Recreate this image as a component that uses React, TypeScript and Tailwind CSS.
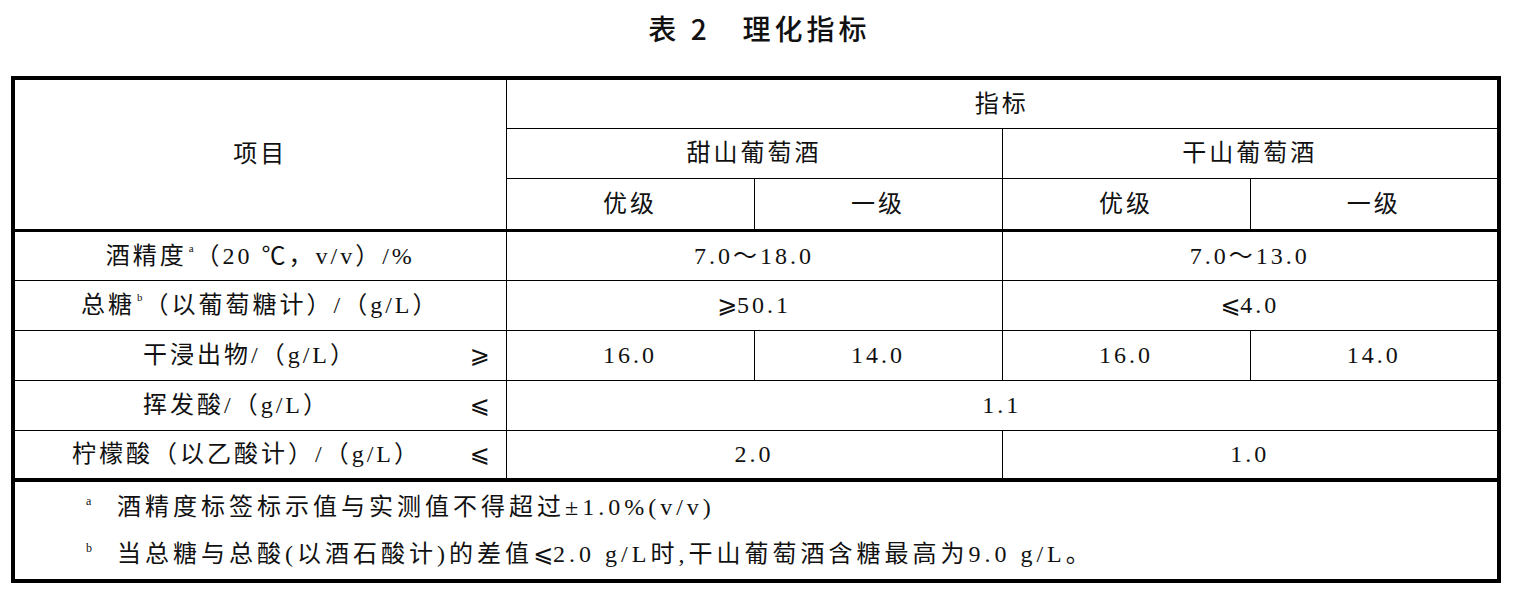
const cell = 'border border-black text-center align-middle p-0'

function Sym({ children }: { children: React.ReactNode }) {
  return <span className="font-['DejaVu_Sans',sans-serif] tracking-normal">{children}</span>
}

function Mark({ children }: { children: React.ReactNode }) {
  return <sup className="relative top-[5px] ml-[2px] mr-[2px] align-top text-[11px] leading-none tracking-normal">{children}</sup>
}

export default function App() {
  return (
    <div className="w-[1519px] h-[607px] bg-white text-[#111] font-['Liberation_Serif','Noto_Sans_CJK_SC',serif] text-[24px] tracking-[3px]">
      {/* Title */}
      <h1 className="h-[76px] pt-[9px] text-center text-[28px] leading-[38px] tracking-[4px] font-['Noto_Sans_CJK_SC',sans-serif] font-medium">
        表 2　理化指标
      </h1>

      <table className="ml-[11px] w-[1486px] table-fixed border-collapse border-4 border-black">
        <colgroup>
          <col className="w-[493px]" />
          <col className="w-[248px]" />
          <col className="w-[248px]" />
          <col className="w-[248px]" />
          <col className="w-[249px]" />
        </colgroup>
        <thead>
          <tr className="h-[50px]">
            <td rowSpan={3} className={`${cell} border-b-[3px]`}>项目</td>
            <td colSpan={4} className={cell}>指标</td>
          </tr>
          <tr className="h-[50px]">
            <td colSpan={2} className={cell}>甜山葡萄酒</td>
            <td colSpan={2} className={cell}>干山葡萄酒</td>
          </tr>
          <tr className="h-[52px]">
            <td className={`${cell} border-b-[3px]`}>优级</td>
            <td className={`${cell} border-b-[3px]`}>一级</td>
            <td className={`${cell} border-b-[3px]`}>优级</td>
            <td className={`${cell} border-b-[3px]`}>一级</td>
          </tr>
        </thead>
        <tbody>
          <tr className="h-[50px]">
            <td className={cell}>
              酒精度<Mark>a</Mark>（20 ℃，v/v）/%
            </td>
            <td colSpan={2} className={cell}>7.0～18.0</td>
            <td colSpan={2} className={cell}>7.0～13.0</td>
          </tr>
          <tr className="h-[50px]">
            <td className={cell}>
              总糖<Mark>b</Mark>（以葡萄糖计）/（g/L）
            </td>
            <td colSpan={2} className={cell}><Sym>⩾</Sym>50.1</td>
            <td colSpan={2} className={cell}><Sym>⩽</Sym>4.0</td>
          </tr>
          <tr className="h-[50px]">
            <td className={cell}>
              <div className="flex items-center justify-between pl-[128px] pr-[16px]">
                <span>干浸出物/（g/L）</span>
                <Sym>⩾</Sym>
              </div>
            </td>
            <td className={cell}>16.0</td>
            <td className={cell}>14.0</td>
            <td className={cell}>16.0</td>
            <td className={cell}>14.0</td>
          </tr>
          <tr className="h-[50px]">
            <td className={cell}>
              <div className="flex items-center justify-between pl-[128px] pr-[16px]">
                <span>挥发酸/（g/L）</span>
                <Sym>⩽</Sym>
              </div>
            </td>
            <td colSpan={4} className={cell}>1.1</td>
          </tr>
          <tr className="h-[50px]">
            <td className={cell}>
              <div className="flex items-center justify-between pl-[57px] pr-[16px]">
                <span>柠檬酸（以乙酸计）/（g/L）</span>
                <Sym>⩽</Sym>
              </div>
            </td>
            <td colSpan={2} className={cell}>2.0</td>
            <td colSpan={2} className={cell}>1.0</td>
          </tr>
        </tbody>
        <tfoot>
          <tr>
            <td colSpan={5} className="border-4 border-black px-0 pt-[1px] pb-[2px] tracking-[4px]">
              <div className="flex h-[47px] items-center">
                <span className="w-[102px] pl-[71px] text-[12px] tracking-normal self-start pt-[9px]">a</span>
                <span>酒精度标签标示值与实测值不得超过±1.0%(v/v)</span>
              </div>
              <div className="flex h-[47px] items-center">
                <span className="w-[102px] pl-[71px] text-[12px] tracking-normal self-start pt-[9px]">b</span>
                <span>
                  当总糖与总酸(以酒石酸计)的差值<Sym>⩽</Sym>2.0 g/L时,干山葡萄酒含糖最高为9.0 g/L。
                </span>
              </div>
            </td>
          </tr>
        </tfoot>
      </table>
    </div>
  )
}
